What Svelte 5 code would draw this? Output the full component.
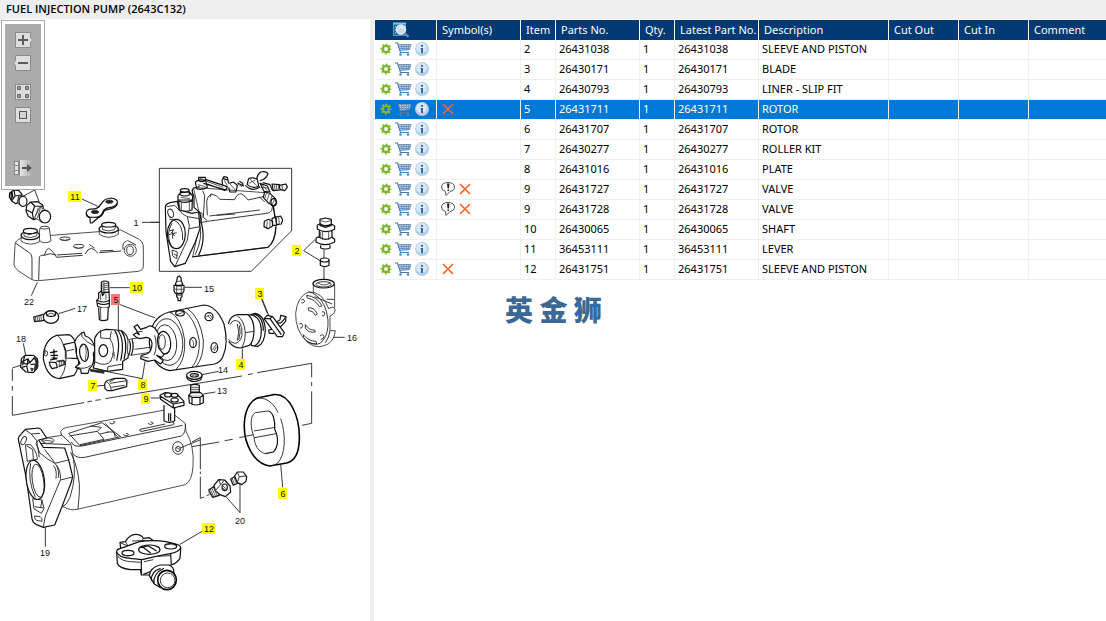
<script>
  const columns = ['Symbol(s)', 'Item', 'Parts No.', 'Qty.', 'Latest Part No.', 'Description', 'Cut Out', 'Cut In', 'Comment'];

  const parts = [
    { item: 2, no: '26431038', desc: 'SLEEVE AND PISTON' },
    { item: 3, no: '26430171', desc: 'BLADE' },
    { item: 4, no: '26430793', desc: 'LINER - SLIP FIT' },
    { item: 5, no: '26431711', desc: 'ROTOR', cross: true },
    { item: 6, no: '26431707', desc: 'ROTOR' },
    { item: 7, no: '26430277', desc: 'ROLLER KIT' },
    { item: 8, no: '26431016', desc: 'PLATE' },
    { item: 9, no: '26431727', desc: 'VALVE', note: true, cross: true },
    { item: 9, no: '26431728', desc: 'VALVE', note: true, cross: true },
    { item: 10, no: '26430065', desc: 'SHAFT' },
    { item: 11, no: '36453111', desc: 'LEVER' },
    { item: 12, no: '26431751', desc: 'SLEEVE AND PISTON', cross: true }
  ];

  let selected = $state(3);

  // Callouts on the drawing: centre x, centre y, and whether the part is in the list
  const callouts = [
    { n: 1, x: 136, y: 223 },
    { n: 2, x: 297, y: 251, listed: true },
    { n: 3, x: 260, y: 294, listed: true },
    { n: 4, x: 241, y: 365, listed: true },
    { n: 5, x: 116, y: 300, listed: true },
    { n: 6, x: 283, y: 494, listed: true },
    { n: 7, x: 93, y: 386, listed: true },
    { n: 8, x: 143, y: 385, listed: true },
    { n: 9, x: 146, y: 399, listed: true },
    { n: 10, x: 137, y: 288, listed: true },
    { n: 11, x: 75, y: 197, listed: true },
    { n: 12, x: 209, y: 529, listed: true },
    { n: 13, x: 222, y: 391 },
    { n: 14, x: 223, y: 370 },
    { n: 15, x: 209, y: 289 },
    { n: 16, x: 352, y: 338 },
    { n: 17, x: 82, y: 309 },
    { n: 18, x: 21, y: 339 },
    { n: 19, x: 45, y: 553 },
    { n: 20, x: 240, y: 521 },
    { n: 22, x: 29, y: 302 }
  ];
</script>

<div class="app">
  <header><h1>FUEL INJECTION PUMP (2643C132)</h1></header>

  <main>
    <section class="drawing" aria-label="Drawing">
      <svg class="exploded" viewBox="0 19 370 602" role="img" aria-label="Exploded view">
        <!-- cover 22, lever 11, shaft 10, banjo 17 -->
        <g transform="translate(0 185) scale(.3333)">
          <path class="b" d="M29,24 L42,15 57,17 66,28 61,50 47,56 35,48 28,36Z M42,15 L45,33 35,48 M45,33 L64,30 M36,20 L39,42 M33,22 L34,44" />
          <path class="w" d="M56,32 L74,34 L66,64 L52,54Z" />
          <path class="k" d="M57,32 L53,54 M61,32 L57,58" />
          <ellipse class="w b" cx="69" cy="49" rx="12" ry="15" />
          <path class="l" d="M69,34 L104,15 L118,52" />
          <path class="b" d="M80,62 L92,51 113,50 128,60 131,74 116,98 101,104 85,94 78,78Z M92,51 L104,63 129,64 M104,63 L97,84 101,104 M97,84 L79,74" />
          <path class="w" d="M120,66 L142,78 L126,112 L104,98Z" />
          <path class="k" d="M115,68 L106,94 M121,70 L112,100 M127,73 L118,104" />
          <ellipse class="w b" cx="135" cy="95" rx="17" ry="19" />

          <path class="w" d="M62,160 Q46,166 45,180 L42,238 Q43,248 54,257 L94,283 Q103,288 116,287 L415,259 Q430,256 430,244 L430,182 Q430,170 416,162 L362,135 L155,151Z" />
          <path class="l" d="M46,174 L88,203 Q96,209 96,219 L96,282 M116,286 L118,216 Q121,208 133,211 Q138,192 146,190 Q158,196 170,217 L248,211 M133,211 L150,206 L168,210 M170,210 L246,205 M256,207 Q262,192 274,190 Q284,193 294,205 M268,178 L284,190 M298,203 L364,198 M300,198 L340,196" />
          <path class="w" d="M120,129 L115,165 Q134,180 153,168 L148,129Z" />
          <ellipse class="w" cx="134" cy="128" rx="14" ry="4" />
          <path class="w" d="M64,147 L63,168 Q90,186 119,170 L118,147Z" />
          <ellipse class="w b" cx="91" cy="151" rx="28" ry="13" />
          <path class="w" d="M70,138 L73,154 Q92,162 110,153 L112,137Z" />
          <ellipse class="w b" cx="91" cy="138" rx="21" ry="8" />
          <path class="l" d="M73,144 L88,149 108,142" />
          <path class="w" d="M298,129 L298,148 Q326,166 355,148 L355,129Z" />
          <ellipse class="w b" cx="326" cy="132" rx="29" ry="12" />
          <path class="w" d="M305,119 L308,134 Q326,142 344,134 L348,119Z" />
          <ellipse class="w b" cx="326" cy="119" rx="21" ry="7" />
          <ellipse class="l" cx="195" cy="161" rx="16" ry="5" />
          <path class="k" d="M182,164 Q195,170 208,163" />
          <ellipse class="l" cx="236" cy="184" rx="16" ry="6" />
          <path class="k" d="M222,186 Q236,194 250,186" />
          <path class="l" d="M380,168 Q366,172 369,194 M382,166 L408,180" />
          <circle class="w" cx="391" cy="196" r="18" />
          <ellipse class="l" cx="390" cy="196" rx="10" ry="13" />
          <path class="l" d="M112,292 L94,332 M426,112 L480,112" />

          <path class="w b" d="M259,84 Q258,76 270,72 Q288,74 296,66 L309,50 Q316,40 334,39 Q354,42 352,54 Q346,66 328,68 Q312,70 308,82 Q304,94 288,97 L268,97 Q258,94 259,84Z" />
          <path class="b" d="M260,88 Q262,100 290,100 Q308,94 312,78 Q318,74 334,71 Q350,66 352,56" />
          <ellipse class="f" cx="285" cy="81" rx="11" ry="5" />
          <ellipse class="f" cx="328" cy="50" rx="11" ry="5" />
          <path class="w b" d="M270,98 L271,114 276,114 294,99" />
          <path class="l" d="M246,42 L298,66" />

          <path class="w b" d="M304,292 Q314,284 326,292 L327,322 L304,322Z" />
          <path class="k" d="M305,298 L326,294 M305,304 L326,300 M305,310 L326,306 M305,316 L326,312 M312,290 L312,322" />
          <path class="w b" d="M296,324 L304,318 L308,332 L314,322 L327,322 L328,340 L328,366 Q310,374 293,364 L290,346 L296,340Z" />
          <path class="b" d="M291,346 Q310,356 329,346 M293,354 Q310,363 329,354" />
          <path class="w b" d="M296,368 L298,404 Q310,410 323,404 L325,368" />
          <path class="k" d="M302,368 V402 M302,326 V346 M318,326 V345" />
          <path class="l" d="M330,308 L389,308 M176,386 L226,370" />
          <path class="w b" d="M101,396 L130,388 L134,406 L104,410Z" />
          <path class="k" d="M106,394 L108,410 M111,393 L114,410 M117,391 L119,410 M122,389 L125,409" />
          <ellipse class="w b" cx="153" cy="396" rx="23" ry="19" />
          <ellipse class="w b" cx="153" cy="386" rx="14" ry="8" />
          <path class="k" d="M141,389 Q153,380 165,389" />
        </g>

        <!-- assembled pump 1, plug 15, sleeve and piston 2 -->
        <g transform="translate(150 160) scale(.3333)">
          <path class="l" d="M0,187 H28" />
          <path class="l" d="M28,25 H425 V212 L304,334 H28Z" />
          <path class="w" d="M148,160 Q165,150 150,190 L128,290 L352,262 Q374,250 378,196 L370,130 L345,98 L130,82Z" />
          <path class="b" d="M126,291 L354,262 Q376,246 378,200 M368,130 L376,178 M128,86 Q124,96 132,108 L132,142 L150,158 L154,188 Q168,240 146,286" />
          <path class="l" d="M152,188 L172,184 L350,160 Q372,158 366,130 M158,92 L164,106 L160,172 L172,182 M148,190 Q160,232 136,284 M172,166 L170,124 Q172,108 184,102 Q200,104 210,118 L254,119 Q260,102 274,101 Q286,108 294,120 L340,110 M178,168 L330,150 M200,166 L256,162 M330,112 L344,126 M130,86 L150,78 M184,102 L180,112" />
          <path class="b" d="M140,86 L136,66 Q150,54 168,64 L172,82 Q156,92 140,86Z M146,52 L166,52 166,62 Q156,68 146,62Z M166,58 L232,80 L228,90 L160,70 M172,72 L226,92 M236,70 L232,52 222,50 216,60 218,76 M220,56 L234,60 M236,82 L240,96 258,96 262,76 250,66 238,70 M262,68 L280,78 278,70 268,64 M292,70 L296,56 Q308,50 322,58 L326,78 Q308,88 292,74Z M286,76 Q308,98 330,80 M322,60 Q318,46 332,36 Q350,32 354,42 Q348,58 330,62 M330,70 L352,78 360,96 342,94Z M338,68 L360,74 368,92" />
          <path class="k" d="M148,54 L164,60 M240,72 L258,92 M222,60 L232,76 M300,58 L320,76 M170,64 L220,82 M264,72 L276,80 M336,74 L352,92 M296,70 L316,60 M144,74 L166,80 M332,82 L356,84" />
          <path class="w b" d="M366,72 L388,74 390,90 370,92Z M388,76 L408,72 412,82 404,92 390,88Z" />
          <path class="k" d="M372,73 L376,92 M378,74 L382,92 M384,75 L387,90 M396,75 L398,90" />
          <path class="w b" d="M344,96 L360,100 376,116 380,130 370,138 354,128 340,112Z" />
          <path class="k" d="M350,98 L344,116 M358,102 L350,124 M366,108 L358,130 M374,118 L366,136" />
          <ellipse class="b" cx="371" cy="127" rx="8" ry="11" />
          <path class="w b" d="M343,184 L356,178 368,184 368,198 354,206 342,200Z M366,176 L378,170 380,196 368,196Z M376,172 L392,168 398,180 394,192 380,194Z" />
          <path class="k" d="M352,184 L350,204 M360,182 L360,202 M386,172 L388,192" />
          <path class="w b" d="M84,120 L86,150 Q105,158 126,150 L127,120Z M84,106 L92,98 L118,96 L128,108 L127,122 Q104,132 84,122Z M92,90 L116,90 119,104 Q104,112 90,104Z" />
          <path class="k" d="M92,112 L120,116 M94,122 L94,152 M118,122 L118,150" />
          <ellipse class="w b" cx="104" cy="91" rx="13" ry="5" />
          <path class="w b" d="M46,142 Q46,132 60,128 L82,124 L88,150 L126,160 L146,156 L150,206 L136,246 L106,310 L74,320 L62,304 L48,216Z" />
          <path class="l" d="M50,140 L74,136 L98,162 L112,170 L118,198 L112,240 L84,300 L76,318 M112,170 L148,176 M118,206 L150,200 M86,122 L90,148" />
          <ellipse class="l" cx="62" cy="160" rx="8" ry="13" transform="rotate(-20 62 160)" />
          <path class="l" d="M66,270 L82,276 80,296 68,288Z M72,282 L82,288 M58,178 L76,178" />
          <ellipse class="w b" cx="79" cy="222" rx="27" ry="44" />
          <path class="l" d="M66,190 Q46,222 64,258 M60,212 L72,210 M56,224 L80,218 M64,216 L74,228 M68,208 V236" />
          <path class="l" d="M72,180 Q100,192 98,240" />

          <path class="w b" d="M82,352 L88,348 93,354 94,364 98,372 92,378 82,378 76,372 80,364Z M72,376 H102 V392 L98,400 H76 L72,392Z M80,402 H96 V410 L92,414 V422 H84 V414 L80,410Z" />
          <path class="k" d="M80,376 V400 M94,376 V400 M72,388 H102 M78,366 L96,362 M82,406 H94" />
          <path class="l" d="M104,382 H156" />

          <path class="w b" d="M510,178 L526,174 L544,178 L544,196 L526,202 L510,196Z M502,200 Q500,192 512,192 Q526,202 544,192 L554,198 V208 Q528,222 502,208Z M508,212 V236 Q528,246 546,236 V212" />
          <path class="w b" d="M498,238 Q498,230 508,232 Q528,244 546,232 L554,238 V246 Q526,262 498,246Z M512,256 V264 Q526,270 540,264 V256" />
          <path class="k" d="M512,182 Q526,190 542,182 M518,214 V240 M536,214 V240 M512,216 V236" />
          <path class="l" d="M522,268 V298 M522,322 V368 M496,238 L461,272 L510,302" />
          <path class="w b" d="M511,300 V316 Q524,324 537,316 V300" />
          <ellipse class="w b" cx="524" cy="300" rx="13" ry="6" />
          <path class="l" d="M335,418 L352,460" />
        </g>

        <!-- rotor train -->
        <g transform="translate(0 290) scale(.3333)">
          <path class="l" d="M70,160 L77,196 M37,234 L62,226 M37,236 V272 M37,288 V302 M37,318 V376 L252,338 M262,336 L276,333 M286,331 L302,329 M316,326 L570,284 L726,258 M744,254 L758,251 M772,248 L935,220" />
          <path class="w b" d="M64,206 L76,196 100,196 112,206 112,234 100,248 78,246 62,232Z" />
          <path class="b" d="M74,198 L70,214 84,206 90,218 102,204 110,212 M66,232 L80,228 84,246 M92,224 L106,222 104,242 M84,206 L82,226 M64,212 L76,222 92,218" />
          <path class="f" d="M104,202 L114,212 V230 L104,242 L108,220Z M64,214 L72,218 68,226Z M92,234 L100,236 96,244Z" />

          <path class="w b" d="M170,136 L208,134 Q220,140 226,156 L190,164 Q200,180 198,204 L236,206 Q238,236 222,256 L178,266 Q140,262 130,206 Q130,150 170,136Z" />
          <path class="l" d="M172,136 Q184,144 190,164 M198,206 Q196,250 178,266 M190,164 L196,184 L222,178 M135,180 V192 M196,184 V206 M226,156 V178 L232,206" />
          <ellipse class="l" cx="137" cy="190" rx="6" ry="8" />
          <path class="b" d="M150,188 L172,184 M152,196 H174 M154,204 H172 M162,178 V210 M150,210 L172,206 M148,216 L168,218 172,232 156,236 150,226Z M172,214 L192,212 196,222 176,230" />
          <path class="k" d="M168,214 L190,210 M178,214 V230 M184,213 V228 M190,212 V226" />

          <path class="w b" d="M224,156 Q232,134 252,126 L256,138 Q280,144 286,180 L280,190 Q286,222 268,236 L264,250 L244,250 L242,238 L226,232 L240,220 Q226,196 230,178Z" />
          <path class="l" d="M244,126 L246,140 262,156 284,168 M232,232 Q254,240 272,226" />
          <ellipse class="w b" cx="252" cy="188" rx="13" ry="26" transform="rotate(-6 252 188)" />
          <path class="k" d="M242,172 L248,166 M256,166 Q262,184 256,210" />

          <path class="w b" d="M284,146 Q292,122 318,118 L350,120 Q384,120 388,170 L384,204 L368,214 L368,238 L322,244 L280,234 L284,216Z" />
          <path class="l" d="M302,120 L302,144 L330,146 L334,124 M330,146 Q350,176 332,214 M286,216 Q318,232 334,212 M322,244 L324,230 L368,222 M280,234 L322,244" />
          <path class="b" d="M344,121 Q364,150 350,212 M353,120 Q376,150 362,212 M364,122 Q386,154 372,208" />
          <ellipse class="w b" cx="310" cy="182" rx="13" ry="18" />
          <path class="k" d="M342,186 V206 M336,190 L346,198" />
          <path class="f" d="M270,238 L312,244 L312,250 L272,244Z" />

          <path class="w" d="M384,150 L396,146 L470,138 L486,148 L484,182 L392,196 L382,190Z" />
          <path class="b" d="M396,148 Q404,170 394,196 M388,152 Q396,170 386,194" />
          <path class="l" d="M404,178 L450,172" />
          <path class="l" d="M355,42 V120 M355,42 L466,84" />
        </g>
        <g transform="translate(180 280) scale(.3333)">
          <!-- hydraulic head -->
          <path class="w b" d="M-32,96 L72,75 Q110,78 132,132 Q146,190 130,226 Q124,246 104,252 L-30,272 Q-84,262 -92,190 Q-92,112 -32,96Z" />
          <path class="l" d="M-32,96 Q4,110 14,180 Q18,240 -12,268 M20,84 Q60,110 70,180 Q72,230 48,260 M6,88 Q46,112 58,182 Q60,232 36,262 M-30,98 L-10,92" />
          <ellipse class="l" cx="-36" cy="186" rx="44" ry="70" transform="rotate(-6 -36 186)" />
          <ellipse class="l" cx="-42" cy="188" rx="32" ry="54" transform="rotate(-6 -42 188)" />
          <ellipse class="w b" cx="-48" cy="188" rx="20" ry="34" transform="rotate(-6 -48 188)" />
          <ellipse class="l" cx="-54" cy="186" rx="10" ry="22" />
          <ellipse class="b" cx="0" cy="100" rx="13" ry="8" />
          <path class="k" d="M-10,104 L8,98" />
          <ellipse class="b" cx="87" cy="110" rx="12" ry="12" />
          <path class="k" d="M78,112 Q90,98 97,114 M82,106 L96,120" />
          <ellipse class="b" cx="39" cy="188" rx="10" ry="15" />
          <path class="k" d="M34,178 Q46,188 38,202" />
          <ellipse class="b" cx="103" cy="203" rx="10" ry="15" />
          <path class="k" d="M98,210 L108,194 M102,214 L110,200" />

          <!-- sleeve 4 -->
          <path class="w b" d="M204,106 L226,100 Q254,106 256,150 Q254,192 232,200 L214,196Z" />
          <path class="b" d="M212,104 Q242,110 244,150 Q244,188 224,198 M220,101 Q250,108 250,152" />
          <path class="w b" d="M145,132 Q150,108 172,104 L204,104 Q222,118 222,150 Q222,184 208,196 L182,204 Q160,204 146,184" />
          <path class="l" d="M172,108 Q192,118 196,158 Q196,188 184,204 M150,134 Q160,114 178,126 Q188,140 186,166 Q180,190 164,190 Q150,186 146,178 M196,158 L222,154 M172,132 Q180,156 172,182 M178,136 Q184,156 176,180" />
          <path class="l" d="M187,206 V238" />
          <!-- blade 3 -->
          <path class="w b" d="M284,128 L300,120 302,106 318,110 317,124 300,142Z" />
          <path class="b" d="M290,130 L304,128 317,112" />
          <path class="w b" d="M252,116 L262,106 278,110 313,158 307,170 292,170Z" />
          <path class="b" d="M254,116 L270,116 304,164 M270,116 L277,110" />
          <path class="w b" d="M276,148 L266,150 268,160 282,160" />
          <path class="l" d="M246,56 L266,106" />

          <!-- end plate 16 -->
          <path class="w" d="M400,14 V50 L456,92 L464,82 V14Z" />
          <ellipse class="w b" cx="431" cy="11" rx="32" ry="13" />
          <ellipse class="l" cx="431" cy="13" rx="23" ry="8" />
          <path class="k" d="M412,8 Q432,22 452,8" />
          <path class="w" d="M386,36 Q428,34 446,86 Q462,76 466,90 Q464,104 450,108 L450,152 L466,152 Q462,190 430,198 Q402,206 380,184 Q346,152 347,100 Q352,48 386,36Z" />
          <path class="l" d="M380,184 Q416,204 430,180 Q446,160 444,120 Q438,66 408,46 Q398,36 386,36 M450,152 Q448,172 436,188 M404,50 L456,72 M440,58 H462" />
          <path class="l" d="M380,46 Q412,50 426,78 L418,80 Q406,58 382,54Z M384,84 Q402,80 412,102 L406,106 Q398,90 386,92Z M376,134 Q388,152 404,150 L406,156 Q386,160 376,144Z M370,164 Q386,184 408,184 L410,192 Q384,192 370,172Z M364,60 Q372,54 374,64 Q370,72 364,68 M358,132 Q366,126 368,136 Q366,148 360,144 M426,96 Q434,92 434,104 Q430,112 426,106 M420,168 Q430,160 432,170 Q428,180 422,178" />
          <path class="l" d="M460,172 H494" />

          <!-- washer 14 and bolt 13 -->
          <path class="l" d="M66,284 L116,274 M70,342 L106,336" />
          <path class="w b" d="M20,288 Q20,298 30,302 Q44,308 60,300 Q66,296 66,284" />
          <ellipse class="w b" cx="43" cy="286" rx="23" ry="12" />
          <ellipse class="b" cx="43" cy="286" rx="12" ry="5" />
          <path class="k" d="M32,290 Q44,280 56,288" />
          <path class="w b" d="M32,316 Q44,310 58,316 V344 H32Z" />
          <path class="k" d="M33,322 H58 M33,328 H58 M33,334 H58 M33,340 H58" />
          <path class="w b" d="M26,346 L34,338 H62 L70,346 V368 Q48,382 28,368Z M26,346 L36,352 H60 L70,346 M36,352 V372 M60,352 V372" />
          <path class="l" d="M395,250 V292 M395,306 V318 M395,334 V430 L366,436" />
        </g>

        <!-- plate 8, roller 7, valve 9 -->
        <g transform="translate(0 290) scale(.3333)">
          <path class="w b" d="M402,110 L412,104 422,118 440,112 Q452,102 466,116 L476,132 472,150 476,174 492,194 484,202 470,196 490,212 482,222 464,210 444,214 422,206 424,196 440,192 Q456,186 456,160 Q454,144 440,142 L420,146 Q408,144 400,134 L410,128 418,134Z" />
          <path class="l" d="M404,112 L412,126 428,124 M426,200 L446,204 M464,136 Q474,170 462,196" />
          <path class="l" d="M435,214 L427,266 L298,240" />
          <path class="w b" d="M314,284 Q316,271 328,270 L344,265 H374 L381,272 L380,290 L336,302 L322,302 L315,296Z" />
          <path class="l" d="M318,274 Q332,280 334,302 M330,280 L381,272 M334,292 L374,286 M346,266 L328,276" />
          <path class="l" d="M452,324 H482 M290,288 L314,286" />
        </g>

        <!-- housing 19 -->
        <g transform="translate(0 410) scale(.3333)">
          <path class="w" d="M110,88 L185,76 L182,64 Q186,54 202,52 L496,0 L522,14 L556,40 L558,64 Q584,110 579,170 Q576,214 556,224 L236,297 Q212,304 190,290Z" />
          <path class="l" d="M182,72 L212,100 L218,130 Q228,146 254,142 L544,78 Q558,70 556,42 M214,96 Q220,112 246,108 L548,46 M212,126 Q242,190 238,250 L234,298 M218,132 Q232,196 210,262 Q200,286 186,292 M116,100 L210,104" />
          <path class="l" d="M206,70 L306,38 L362,80 L240,107Z M208,78 L292,64 L312,88 M292,64 L304,52 M304,52 L272,48 M320,66 L342,66 346,82 M312,88 L240,104 M300,72 L326,66 M316,40 L352,80" />
          <path class="l" d="M328,38 Q336,46 344,38 Q346,34 340,34 M444,40 Q452,48 460,40 Q458,36 452,36 M370,74 Q378,82 386,74 Q384,70 378,70 M420,58 Q416,64 426,64 L520,44 Q526,38 518,36 M420,58 L496,42" />
          <ellipse class="w" cx="144" cy="92" rx="18" ry="8" />
          <path class="k" d="M118,86 L134,96 M130,90 L160,94" />
          <path class="w b" d="M55,88 Q54,80 62,74 L76,58 L116,54 Q124,56 128,66 L140,84 L116,90 L130,112 L194,114 L206,150 L218,200 L214,216 L186,290 L164,345 L130,352 L108,343 Q98,338 96,326 L78,200Z" />
          <path class="l" d="M76,60 L94,72 L110,92 L118,142 M116,90 L108,100 L120,130 Q128,134 138,144 L164,160 Q182,176 182,208 L136,318 L130,350 M164,160 L206,150 M182,210 L218,201 M94,72 L120,70 M134,118 L164,158 M160,166 Q172,180 168,206 M170,166 Q178,184 176,204" />
          <ellipse class="l" cx="71" cy="92" rx="7" ry="13" transform="rotate(25 71 92)" />
          <path class="l" d="M76,104 H92 Q104,116 110,134 L112,148 L96,150 L82,154Z M80,108 L98,118 100,148 M98,266 L126,270 132,296 124,310 102,296Z M104,290 L130,294 M126,270 L122,294 M104,318 Q102,330 114,332 L126,334 Q128,324 120,320Z" />
          <ellipse class="w b" cx="106" cy="210" rx="27" ry="59" transform="rotate(-8 106 210)" />
          <ellipse class="l" cx="114" cy="212" rx="17" ry="50" transform="rotate(-8 114 212)" />
          <path class="l" d="M92,160 Q82,210 106,262" />
          <ellipse class="l" cx="534" cy="114" rx="16" ry="19" />
          <ellipse class="l" cx="534" cy="117" rx="7" ry="8" />
          <path class="k" d="M528,112 L542,120" />
          <path class="l" d="M136,352 V410 M540,114 L600,90 M576,110 L658,96 M674,92 L698,88" />
        </g>
        <g transform="translate(0 290) scale(.3333)">
          <path class="w b" d="M492,345 V392 Q508,402 524,392 V345" />
          <path class="b" d="M506,370 V394 M512,370 V394" />
          <path class="w b" d="M480,316 L496,308 L530,312 L552,334 V346 L520,354 L482,328Z M480,318 L520,342 L552,336 M520,342 V354" />
          <ellipse class="w b" cx="504" cy="315" rx="10" ry="6" />
          <ellipse class="w b" cx="524" cy="316" rx="10" ry="6" />
          <ellipse class="w b" cx="524" cy="330" rx="11" ry="6" />
        </g>

        <!-- cam ring 6 and plugs 20 -->
        <g transform="translate(190 380) scale(.3333)">
          <path class="w h" d="M239,258 C192,252 160,190 163,130 C165,84 186,54 212,52 L250,44 C300,38 330,112 328,178 C327,224 312,244 290,249Z" />
          <path class="l" d="M208,54 C236,54 256,78 264,98 M272,116 C288,160 288,226 262,250 Q252,258 239,258" />
          <path class="b" d="M235,93 C250,96 256,124 254,148 C268,176 264,202 250,216 L226,221" />
          <path class="l" d="M235,93 L196,98 C178,108 182,148 192,170 C194,194 202,214 226,221 M192,153 L256,142 M194,173 L258,161" />
          <path class="l" d="M148,173 L190,164 M272,252 L278,322" />
          <path class="l" d="M6,186 L31,173 V268 M31,275 V282 M31,290 V355 L42,351 M50,347 L58,344" />
          <path class="w b" d="M56,330 L74,318 88,346 68,352Z" />
          <path class="k" d="M60,326 L72,352 M65,323 L77,350 M70,320 L82,348 M56,336 L66,350" />
          <path class="w b" d="M72,316 L86,299 104,300 120,318 122,336 106,350 90,344 76,332Z" />
          <path class="l" d="M86,299 L92,314 76,332 M92,314 L104,300" />
          <ellipse class="w b" cx="104" cy="322" rx="8" ry="10" />
          <path class="k" d="M99,318 L110,328 M98,324 L106,330" />
          <path class="w b" d="M122,298 L136,288 144,310 130,316Z" />
          <path class="k" d="M127,296 L134,314 M132,292 L140,311" />
          <path class="w b" d="M134,288 L142,276 160,276 170,290 168,304 156,314 142,308Z" />
          <path class="l" d="M142,276 L148,290 142,308 M148,290 L168,288" />
          <path class="l" d="M108,350 L150,398 V312" />
        </g>

        <!-- sleeve and piston 12 -->
        <g transform="translate(100 515) scale(.3333)">
          <path class="w b" d="M62,100 L60,82 L76,80 Q90,56 110,58 Q126,60 130,70 L148,68 L158,76 L150,100Z" />
          <path class="l" d="M76,80 L84,92 M96,78 L146,76 M62,84 L92,96 M130,70 L126,78" />
          <path class="w b" d="M50,110 Q50,102 62,100 L118,80 Q180,70 236,90 Q244,94 242,104 L240,130 Q230,146 212,150 L168,160 L150,180 L124,180 L122,164 L92,164 Q56,160 52,144Z" />
          <path class="b" d="M50,112 Q58,128 90,130 L126,134 L168,124 L210,116 Q236,112 241,100 M124,136 V178 M212,118 L214,148 M130,178 L172,162" />
          <path class="l" d="M52,122 Q62,138 92,140 L122,142 M172,124 L210,122 M132,140 L160,134" />
          <ellipse class="b" cx="84" cy="114" rx="18" ry="8" />
          <path class="k" d="M68,118 Q84,128 100,118" />
          <ellipse class="b" cx="212" cy="94" rx="18" ry="8" />
          <path class="k" d="M198,90 Q214,82 228,92" />
          <ellipse class="b" cx="148" cy="104" rx="32" ry="14" />
          <path class="b" d="M128,96 L152,114 M144,92 L170,108 M122,98 L146,92" />
          <path class="w b" d="M148,182 Q150,158 180,150 L206,150 Q222,154 222,174 L182,218 L162,206Z" />
          <path class="b" d="M154,198 Q152,168 182,160 M162,206 Q158,176 192,160" />
          <ellipse class="w h" cx="201" cy="195" rx="28" ry="29" />
          <ellipse class="l" cx="203" cy="196" rx="22" ry="22" />
          <path class="l" d="M240,88 L308,48" />
        </g>

        {#each callouts as c}
          {#if c.listed}
            <rect
              class={parts[selected].item === c.n ? 'tag current' : 'tag'}
              x={c.x - (c.n > 9 ? 7 : 5)}
              y={c.y - 6}
              width={c.n > 9 ? 13 : 9}
              height="11"
            />
          {/if}
          <text class="num" x={c.x} y={c.y + 3}>{c.n}</text>
        {/each}
      </svg>

      <div class="tools" role="toolbar" aria-label="View">
        <div class="tools-inner">
          <button type="button" aria-label="Zoom in">
            <svg viewBox="0 0 20 16">
              <path class="tile" d="M2.500,.5H17.500V5.500L19.500,8L17.500,10.500V15.500H2.500Z" />
              <path class="glyph" d="M10,3V13M5,8H15" />
            </svg>
          </button>
          <button type="button" aria-label="Zoom out">
            <svg viewBox="0 0 20 16">
              <path class="tile" d="M2.500,.5H17.500V15.500H2.500V10.500L.5,8L2.500,5.500Z" />
              <path class="glyph" d="M5,8H15" />
            </svg>
          </button>
          <button type="button" class="group" aria-label="Tile">
            <svg viewBox="0 0 20 16">
              <rect class="tile" x="2.500" y=".5" width="15" height="15" />
              <path class="small" d="M4.500,2.500h3v3h-3zM12.500,2.500h3v3h-3zM4.500,10.500h3v3h-3zM12.500,10.500h3v3h-3z" />
            </svg>
          </button>
          <button type="button" aria-label="Fit">
            <svg viewBox="0 0 20 16">
              <rect class="tile" x="2.500" y=".5" width="15" height="15" />
              <rect class="frame" x="6.500" y="4.500" width="7" height="7" />
            </svg>
          </button>
          <button type="button" class="last" aria-label="Toggle panel">
            <svg viewBox="0 0 20 16">
              <defs>
                <linearGradient id="fade"><stop offset="0" stop-color="#e6e6e6" /><stop offset="1" stop-color="#ababab" /></linearGradient>
              </defs>
              <path fill="url(#fade)" d="M7,0H19V16H7Z" />
              <path fill="#e6e6e6" stroke="#868686" d="M1.500,1.500h4v4h-4zM1.500,5.500h4v5h-4zM1.500,10.500h4v4h-4zM6.500,.5V15.500" />
              <path fill="#555" d="M9,7H14V4L19,8L14,12V9H9Z" />
            </svg>
          </button>
        </div>
      </div>
    </section>

    <section class="list" aria-label="Parts">
      <table>
        <colgroup>
          <col class="c-act" /><col class="c-no" /><col class="c-num" /><col class="c-no" /><col class="c-num" />
          <col class="c-no" /><col class="c-desc" /><col class="c-cut" /><col class="c-cut" /><col />
        </colgroup>
        <thead>
          <tr>
            <th scope="col" class="find">
              <button type="button" aria-label="Search">
                <svg width="17" height="16" viewBox="0 0 17 16">
                  <rect x=".5" y="1.500" width="12" height="12" fill="#23649b" stroke="#4f9ccb" />
                  <path d="M0,1.500H13" stroke="#7cc8ea" stroke-width="2" />
                  <path d="M2.500,4V13M4,5.500H6M4,8.500H5" stroke="#6fb5de" stroke-dasharray="2 1" />
                  <circle cx="8" cy="7.500" r="4.500" fill="#c5dcea" stroke="#e8f1f6" stroke-width="1.400" />
                  <path d="M6,6.500Q7.500,4.500 10,6" stroke="#fff" fill="none" />
                  <path d="M11.500,11L15.500,15" stroke="#5b8db8" stroke-width="2.400" />
                </svg>
              </button>
            </th>
            {#each columns as name}
              <th scope="col">{name}</th>
            {/each}
          </tr>
        </thead>
        <tbody>
          {#each parts as p, i}
            <tr class:selected={i === selected} onclick={() => (selected = i)}>
              <td class="actions">
                <div>
                  <button type="button" aria-label="Options">
                    <svg width="12" height="12" viewBox="0 0 12 12">
                      <circle cx="6" cy="6" r="4.700" fill="none" stroke="#8fbf3a" stroke-width="1.800" stroke-dasharray="1.900 1.790" stroke-dashoffset=".95" />
                      <circle cx="6" cy="6" r="3.100" fill="none" stroke="#7fb52c" stroke-width="2.400" />
                    </svg>
                  </button>
                  <button type="button" aria-label="Add to cart">
                    <svg width="17" height="14" viewBox="0 0 17 14">
                      <path d="M3.500,2H16L14.500,7.500L5.500,8.500Z" fill="#c3d3e4" />
                      <path d="M0,1H2.500L5.500,10.500H14" fill="none" stroke="#4a78ac" stroke-width="1.200" />
                      <path d="M3,2.500H16L14.500,7.500L5,8.500M3.500,4.500H15.500M4.500,6.500H15M6.500,2.500L7,8.500M9,2.500V8.500M11.500,2.500V8.500M14,2.500L13,8" fill="none" stroke="#5f88b5" stroke-width=".8" />
                      <circle cx="5.500" cy="12.500" r="1.300" fill="#4b8bc4" />
                      <circle cx="13" cy="12.500" r="1.300" fill="#4b8bc4" />
                    </svg>
                  </button>
                  <button type="button" aria-label="Information">
                    <svg width="14" height="14" viewBox="0 0 14 14">
                      <circle cx="7" cy="7" r="7" fill="#b4d0e6" />
                      <ellipse cx="6.500" cy="6" rx="5.200" ry="5" fill="#dbe9f4" />
                      <path d="M6,3H8V4.800H6ZM5.500,6H8V11H6V7H5.500Z" fill="#34679f" />
                    </svg>
                  </button>
                </div>
              </td>
              <td class="symbols">
                <div>
                  {#if p.note}
                    <svg width="16" height="16" viewBox="0 0 16 16">
                      <path d="M5.500,10.500Q1.500,9.500 1.500,6Q1.800,1.600 8,1.500Q14.200,1.600 14.500,6Q14.300,9.800 10,10.500L6,14.500Z" fill="#fff" stroke="#555" />
                      <path d="M7,2.500H9.500L9,7.500H7.500ZM7.500,8.500H9V10H7.500Z" fill="#222" />
                    </svg>
                  {/if}
                  {#if p.cross}
                    <svg width="16" height="16" viewBox="0 0 16 16">
                      <path d="M3.500,3.500L12.500,12.500M12.500,3.500L3.500,12.500" stroke="#ff6426" stroke-width="1.700" stroke-linecap="round" />
                    </svg>
                  {/if}
                </div>
              </td>
              <td>{p.item}</td>
              <td>{p.no}</td>
              <td>1</td>
              <td>{p.no}</td>
              <td>{p.desc}</td>
              <td></td>
              <td></td>
              <td></td>
            </tr>
          {/each}
        </tbody>
      </table>
      <p class="brand" lang="zh">英 金 狮</p>
    </section>
  </main>
</div>

<style>
  :global(body) {
    background: #efefef;
  }

  .app {
    display: flex;
    flex-direction: column;
    min-height: 100vh;
    font-family: 'Noto Sans', 'Open Sans', sans-serif;
    font-size: 11px;
    color: #000;
  }

  header {
    background: #efefef;
    padding: 0 6px;
  }

  h1 {
    margin: 0;
    font-size: 11px;
    line-height: 18px;
    padding-bottom: 1px;
    font-weight: 600;
    font-family: 'Open Sans', 'Noto Sans', sans-serif;
  }

  main {
    flex: 1;
    display: grid;
    grid-template-columns: minmax(0, 370fr) minmax(0, 732fr);
    column-gap: 4px;
  }

  .drawing {
    position: relative;
    background: #fff;
  }

  .exploded {
    display: block;
    width: 100%;
  }

  .exploded path,
  .exploded ellipse,
  .exploded circle {
    fill: none;
    stroke: #333;
    stroke-width: 2.6;
    stroke-linejoin: round;
  }

  .exploded .w {
    fill: #fff;
  }

  .exploded .l {
    stroke: #2a2a2a;
    stroke-width: 2.8;
  }

  .exploded .b {
    stroke: #111;
    stroke-width: 3.6;
  }

  .exploded .h {
    stroke: #000;
    stroke-width: 4.8;
  }

  .exploded .k {
    stroke: #333;
    stroke-width: 2.4;
  }

  .exploded .f {
    fill: #222;
  }

  .tag {
    fill: #ff0;
  }

  .tag.current {
    fill: #f77;
  }

  .num {
    font-family: 'Liberation Sans', Arial, sans-serif;
    font-size: 9px;
    text-anchor: middle;
    fill: #111;
  }

  .tools {
    position: absolute;
    left: 1px;
    top: 1px;
    padding: 3px;
    border: 1px solid #aaa;
    background: #fff;
  }

  .tools-inner {
    display: flex;
    flex-direction: column;
    align-items: center;
    gap: 7px;
    padding: 8px 8px 10px;
    background: #ababab;
  }

  .tools svg {
    display: block;
    width: 20px;
    height: 16px;
  }

  .tools .group {
    margin-top: 6px;
  }

  .tools .last {
    margin-top: 30px;
  }

  .tile {
    fill: #dedede;
    stroke: #8a8a8a;
  }

  .glyph {
    stroke: #5a5a5a;
    stroke-width: 2;
  }

  .small {
    fill: #999;
    stroke: #666;
  }

  .frame {
    fill: #d2d2d2;
    stroke: #555;
  }

  button {
    display: block;
    margin: 0;
    padding: 0;
    border: 0;
    background: none;
    cursor: pointer;
  }

  .list {
    background: #fff;
    padding: 1px 0 0 1px;
  }

  table {
    width: 100%;
    table-layout: fixed;
    border-collapse: separate;
    border-spacing: 0;
  }

  .c-act {
    width: 62px;
  }

  .c-no {
    width: 84px;
  }

  .c-num {
    width: 35px;
  }

  .c-desc {
    width: 130px;
  }

  .c-cut {
    width: 70px;
  }

  th {
    height: 20px;
    padding: 0 0 0 5px;
    background: #003973;
    border-right: 1px solid #fff;
    color: #fff;
    font-weight: 400;
    line-height: 20px;
    text-align: left;
    white-space: nowrap;
  }

  th.find {
    padding-left: 18px;
  }

  th svg {
    display: block;
    fill: none;
  }

  td {
    height: 19px;
    padding: 0 0 0 3px;
    border-right: 1px solid #efefef;
    border-bottom: 1px solid #efefef;
    line-height: 17px;
    vertical-align: top;
    white-space: nowrap;
  }

  th:last-child,
  td:last-child {
    border-right: 0;
  }

  .selected td {
    background: #0078d7;
    background-clip: padding-box;
    color: #fff;
  }

  td.actions {
    padding-left: 5px;
  }

  .actions div,
  .symbols div {
    display: flex;
    align-items: center;
    height: 18px;
  }

  .actions div {
    gap: 3px;
  }

  .symbols div {
    gap: 1px;
  }

  td svg {
    display: block;
  }

  .brand {
    margin: 0;
    padding: 9px 0 0 130px;
    font-family: 'Noto Sans CJK SC', sans-serif;
    font-size: 28px;
    line-height: 40px;
    font-weight: 900;
    color: #3d6795;
  }
</style>
